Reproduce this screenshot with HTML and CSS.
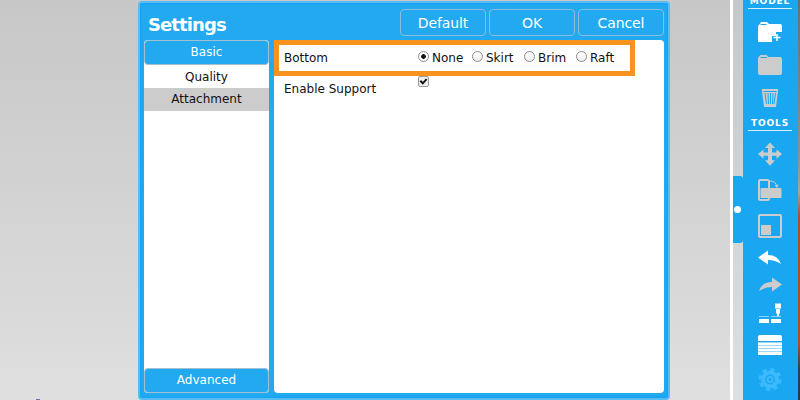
FILE: index.html
```
<!DOCTYPE html>
<html lang="en">
<head>
<meta charset="utf-8">
<title>Settings</title>
<link rel="stylesheet" href="styles.css">
</head>
<body>
<div class="app">
  <main class="canvas">
    <section class="dialog">
      <header class="head">
        <h1>Settings</h1>
        <div class="actions"><button>Default</button><button>OK</button><button>Cancel</button></div>
      </header>
      <div class="body">
        <nav class="tabs">
          <div class="tab basic"><span>Basic</span></div>
          <div class="item"><span class="quality">Quality</span></div>
          <div class="item selected"><span class="attachment">Attachment</span></div>
          <div class="tab advanced"><span>Advanced</span></div>
        </nav>
        <div class="panel">
          <div class="row highlight">
            <span class="label bottom">Bottom</span>
            <div class="options">
              <label><i class="radio on"></i>None</label>
              <label><i class="radio"></i>Skirt</label>
              <label><i class="radio"></i>Brim</label>
              <label><i class="radio"></i>Raft</label>
            </div>
          </div>
          <div class="row support">
            <span class="label">Enable Support</span>
            <i class="check"><svg width="9" height="9" viewBox="0 0 9 9"><path d="M1.3 3.8 3.8 6.4 7.6 2.2" fill="none" stroke="#111" stroke-width="2"/></svg></i>
          </div>
        </div>
      </div>
    </section>
    <i class="mark"></i>
  </main>
  <div class="divider"></div>
  <div class="gutter"><div class="handle"><i></i></div></div>
  <aside class="tools">
    <h2 class="model">MODEL</h2>
    <svg class="icons" width="55" height="400" viewBox="743 0 55 400">
      <g fill="#fff">
        <path d="M758 42V27q0-2 2-3l1-2h6l2 2h11q2 0 2 2v6h-6v4h-4v6z"/>
        <path d="M777 34v7M773.500 37.500h7" stroke="#fff" stroke-width="1.500"/>
      </g>
      <path d="M760.500 24.500h6" stroke="#1aa7f2"/>
      <path d="M758 72V59q0-2 1.500-3l1-1h6l2 2H780q2 0 2 2v14q0 2-2 2H760q-2 0-2-2z" fill="#ccc"/>
      <path d="M760.500 57.500h6.500" stroke="#1aa7f2"/>
      <path d="M762 89h16v2l-2 16h-12l-2-16z" fill="#ccc"/>
      <path d="M763.500 91.500h13M765 93l1.500 11M768 93l.5 11M770.500 93v11M773 93l-.5 11M775.500 93l-1.500 11" stroke="#1aa7f2" fill="none"/>
      <path d="M770 142.500 775 148h-3v4.500h4.500v-3L782 154l-5.500 4.700v-3H772v4.500h3l-5 5.500-5-5.500h3v-4.500h-4.500v3L758 154l5.500-4.500v3h4.500V148h-3z" fill="#ccc"/>
      <g fill="none" stroke="#ccc">
        <rect x="759" y="180" width="10" height="20" rx="1.500" stroke-width="2"/>
        <path d="M770 181q6 0 7 6M775 185l2 2.500 1-3"/>
        <path d="M761 188.500h20v9h-20z" fill="#ccc"/>
        <rect x="759" y="215" width="22" height="22" rx="1" stroke-width="2"/>
        <path d="M761 225h10v10h-10z" fill="#ccc" stroke="none"/>
      </g>
      <path d="M758 257.500l10-7v4.500q10 0 13 9-6-4-13-4v4.500z" fill="#fff"/>
      <path d="M782 284.500l-10-7v4.500q-10 0-13 9 6-4 13-4v4.500z" fill="#ccc"/>
      <path d="M775 303.500h6v5h-6zM776 309h4v4l-1 1v3h-2v-3l-1-1zM759 319h10v4h-10zM771 319h10v4h-10z" fill="#fff"/>
      <path d="M759 316.500h10M771 316.500h10" stroke="#8fd4fa"/>
      <path d="M760 335h20q2 0 2 2v4h-24v-4q0-2 2-2zM758 342h24v13h-24z" fill="#fff"/>
      <path d="M758 342.500h24M758 345.500h24M758 348.500h24M758 351.500h24" stroke="#83cff9" stroke-width=".8"/>
      <g fill="none" stroke="#3cbaff">
        <circle cx="770" cy="379.500" r="7" stroke-width="4"/>
        <circle cx="770" cy="379.500" r="10" stroke-width="3" stroke-dasharray="4 3.854"/>
        <circle cx="770" cy="379.500" r="2.500" stroke-width="2"/>
      </g>
    </svg>
    <h2 class="toolshead">TOOLS</h2>
  </aside>
  <div class="photo"></div>
</div>
</body>
</html>
```
FILE: styles.css
```
*{box-sizing:border-box}
body{margin:0;width:800px;height:400px;overflow:hidden;font:12px "DejaVu Sans",sans-serif;color:#111}
.app{display:flex;height:400px;background:linear-gradient(#c7c7c7,#dfdfdf)}
.canvas{width:730px;position:relative}
.dialog{width:532px;height:399px;margin:1px 0 0 138px;background:#22a9ef;border:2px solid #59bdf3;border-radius:4px;box-shadow:inset 0 0 3px #079cff;padding:6px 4px 5px}
.head{display:flex;justify-content:space-between;height:31px;padding-left:4px}
h1{margin:4px 0 0;font:bold 18px/24px "DejaVu Sans",sans-serif;letter-spacing:-.9px;color:#fff}
.actions{display:flex;gap:3px}
button{width:86px;height:27px;border:1px solid #8bbddb;border-radius:4px;background:#22a9ef;color:#fff;font:14px "DejaVu Sans",sans-serif;letter-spacing:-.1px;padding:0}
.body{display:flex;gap:5px;height:353px}
.tabs{width:125px;display:flex;flex-direction:column;background:#fff;border-radius:4px}
.tab{height:25px;border:1px solid #a4bfce;border-radius:4px;background:#22a9ef;color:#fff;text-align:center;line-height:23px}
.item{height:23px;text-align:center;line-height:25px}
.selected{background:#ccc;line-height:23px}
.advanced{margin-top:auto}
.panel{width:390px;background:#fff;border-radius:4px}
.row{display:flex;padding-left:10px}
.highlight{width:361px;height:36px;border:5px solid #f7931e;padding-left:5px}
.label{width:134px;line-height:26px}
.bottom{line-height:27px}
.options{display:flex;line-height:24px}
.options label{display:flex;align-items:center;width:52px}
.options label:first-child{width:54px}
.radio{width:11px;height:11px;border:1px solid #8c8c8c;border-radius:50%;background:linear-gradient(#fff,#eee);margin:-3px 3px 0 0;flex:none}
.on{background:radial-gradient(circle,#111 0 2px,#fff 2.6px)}
.support{height:27px}
.check{width:11px;height:11px;border:1px solid #999;border-radius:2px;background:#eee}
.check svg{display:block}
.mark{position:absolute;left:36px;top:399px;width:4px;height:1px;background:#7563ca}
.divider{width:3px;background:#fff}
.gutter{width:10px;padding-top:176px}
.handle{width:10px;height:67px;background:#1aa7f2;border-radius:0 3px 3px 0;display:flex;align-items:center}
.handle i{width:7px;height:7px;margin-left:1px;border-radius:50%;background:#fff}
.tools{width:55px;background:#1aa7f2;position:relative}
.icons{display:block}
h2{position:absolute;left:5px;margin:0;width:44px;height:13px;border-bottom:1px solid #d7effc;color:#fff;font:bold 9px/11px "DejaVu Sans",sans-serif;text-align:center;letter-spacing:.9px;white-space:nowrap}
.model{top:-4px}
.toolshead{top:118px}
.photo{width:2px;background:linear-gradient(#5e7184,#8792a4 40%,#a6a2a6 48%,#a64f32 54%,#b54a2a 86%,#1e4668 92%,#203850)}
```
